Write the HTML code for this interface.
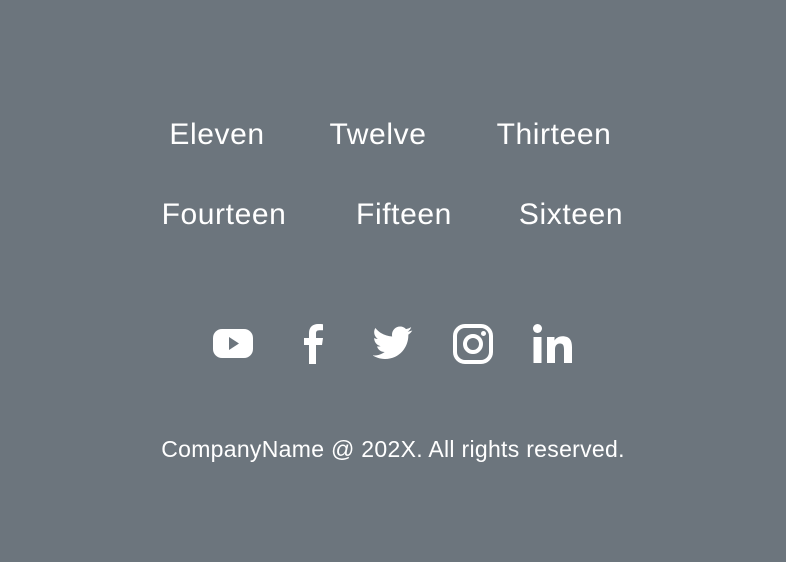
<!DOCTYPE html>
<html><head><style>
body{margin:0;width:786px;height:562px;background:#6c757d;font-family:"Liberation Sans",sans-serif;color:#fff;position:relative;overflow:hidden}
.t{position:absolute;font-size:30px;letter-spacing:0.6px;white-space:nowrap;transform:translateX(-50%);line-height:1}
.f{position:absolute;left:393px;top:438px;font-size:23px;letter-spacing:0.3px;transform:translateX(-50%);white-space:nowrap;line-height:1}
svg{position:absolute}
</style></head><body>
<div class="t" style="left:217px;top:120px">Eleven</div>
<div class="t" style="left:378px;top:120px">Twelve</div>
<div class="t" style="left:554px;top:120px">Thirteen</div>
<div class="t" style="left:224px;top:200px">Fourteen</div>
<div class="t" style="left:404px;top:200px">Fifteen</div>
<div class="t" style="left:571px;top:200px">Sixteen</div>

<svg style="left:213px;top:329px" width="40" height="29" viewBox="0 0 40 29"><rect x="0" y="0" width="40" height="29" rx="9" fill="#fff"/><path d="M16 8 L26 14.5 L16 21Z" fill="#6c757d"/></svg>

<svg style="left:302px;top:324px" width="22" height="40" viewBox="0 0 22 40"><path d="M7 40V21H2v-7h5V9c0-6 4-9 9-9 2 0 4 0 5 .3v6h-3.5c-3 0-3.5 1.4-3.5 3.4V14h7l-1 7h-6v19z" fill="#fff"/></svg>

<svg style="left:373px;top:326px" width="40" height="34" viewBox="0 0 24 20"><path d="M23.6 2.4c-.9.4-1.8.6-2.8.8 1-.6 1.8-1.6 2.1-2.7-.9.6-2 1-3.1 1.2C19 .7 17.700.1 16.3.1c-2.7 0-4.9 2.2-4.9 4.9 0 .4 0 .8.1 1.1C7.4 5.9 3.8 4 1.4 1 1 1.7.7 2.600.7 3.5c0 1.7.9 3.2 2.2 4.1-.8 0-1.6-.2-2.2-.6v.1c0 2.4 1.7 4.4 3.9 4.8-.4.1-.8.2-1.300.2-.3 0-.6 0-.9-.1.6 2 2.4 3.4 4.6 3.4-1.7 1.3-3.8 2.1-6.1 2.1-.4 0-.8 0-1.2-.1 2.2 1.4 4.8 2.2 7.5 2.2 9.1 0 14-7.5 14-14v-.6c1-.7 1.8-1.6 2.4-2.6z" fill="#fff"/></svg>

<svg style="left:453px;top:324px" width="40" height="40" viewBox="0 0 40 40"><rect x="2" y="2" width="36" height="36" rx="10" fill="none" stroke="#fff" stroke-width="4"/><circle cx="20" cy="20" r="8" fill="none" stroke="#fff" stroke-width="4"/><circle cx="30.5" cy="9.5" r="2.5" fill="#fff"/></svg>

<svg style="left:533px;top:324px" width="40" height="40" viewBox="0 0 40 40"><circle cx="4.5" cy="4.5" r="4.5" fill="#fff"/><rect x="0.5" y="13" width="8" height="26" fill="#fff"/><path d="M14 13h7.5v3.6c1.2-2.2 4-4.3 8-4.3 7.5 0 9.5 4.5 9.5 11V39h-8V25.5c0-3.2-.6-6-4-6s-5 2.4-5 6V39h-8z" fill="#fff"/></svg>

<div class="f">CompanyName @ 202X. All rights reserved.</div>
</body></html>
